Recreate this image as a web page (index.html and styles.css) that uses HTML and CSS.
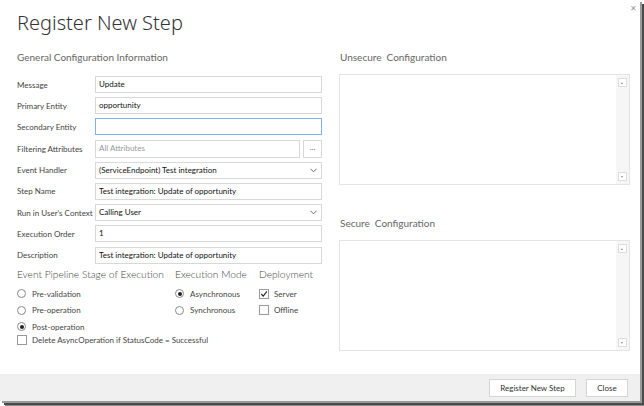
FILE: index.html
```html
<!DOCTYPE html>
<html>
<head>
<meta charset="utf-8">
<link rel="stylesheet" href="styles.css">
</head>
<body>
<div class="dialog">
  <div class="close-x">✕</div>
  <div class="content">
    <h1 class="title">Register New Step</h1>
    <div class="columns">
      <div class="left">
        <h2 class="section">General Configuration Information</h2>
        <div class="form">
          <div class="row"><span class="lbl">Message</span><div class="field">Update</div></div>
          <div class="row"><span class="lbl">Primary Entity</span><div class="field">opportunity</div></div>
          <div class="row"><span class="lbl">Secondary Entity</span><div class="field focus"></div></div>
          <div class="row"><span class="lbl">Filtering Attributes</span><div class="field placeholder">All Attributes</div><div class="dots">...</div></div>
          <div class="row"><span class="lbl">Event Handler</span><div class="field select">(ServiceEndpoint) Test integration<svg class="chev" viewBox="0 0 8 5"><path d="M0.5 0.5 L4 4 L7.5 0.5" fill="none" stroke="#555" stroke-width="1"/></svg></div></div>
          <div class="row"><span class="lbl">Step Name</span><div class="field">Test integration: Update of opportunity</div></div>
          <div class="row"><span class="lbl">Run in User's Context</span><div class="field select">Calling User<svg class="chev" viewBox="0 0 8 5"><path d="M0.5 0.5 L4 4 L7.5 0.5" fill="none" stroke="#555" stroke-width="1"/></svg></div></div>
          <div class="row"><span class="lbl">Execution Order</span><div class="field">1</div></div>
          <div class="row"><span class="lbl">Description</span><div class="field">Test integration: Update of opportunity</div></div>
        </div>
        <div class="options">
          <div class="group stage">
            <div class="ghead">Event Pipeline Stage of Execution</div>
            <div class="opt"><span class="radio"></span>Pre-validation</div>
            <div class="opt"><span class="radio"></span>Pre-operation</div>
            <div class="opt"><span class="radio on"></span>Post-operation</div>
          </div>
          <div class="group mode">
            <div class="ghead">Execution Mode</div>
            <div class="opt"><span class="radio on"></span>Asynchronous</div>
            <div class="opt"><span class="radio"></span>Synchronous</div>
          </div>
          <div class="group deploy">
            <div class="ghead">Deployment</div>
            <div class="opt"><span class="check"><svg viewBox="0 0 9 9"><path d="M1.5 4.5 L3.6 6.8 L7.8 1.6" fill="none" stroke="#222" stroke-width="1.3"/></svg></span>Server</div>
            <div class="opt"><span class="check"></span>Offline</div>
          </div>
        </div>
        <div class="opt delete"><span class="check"></span>Delete AsyncOperation if StatusCode = Successful</div>
      </div>
      <div class="right">
        <h2 class="section">Unsecure&nbsp; Configuration</h2>
        <div class="area">
          <div class="sb"><span class="arr up"></span><span class="arr down"></span></div>
        </div>
        <h2 class="section second">Secure&nbsp; Configuration</h2>
        <div class="area">
          <div class="sb"><span class="arr up"></span><span class="arr down"></span></div>
        </div>
      </div>
    </div>
  </div>
  <div class="footer">
    <button class="btn reg">Register New Step</button>
    <button class="btn cls">Close</button>
  </div>
</div>
</body>
</html>
```
FILE: styles.css
```css
html, body {
  margin: 0;
  padding: 0;
  background: #ffffff;
}
body {
  width: 644px;
  height: 406px;
  overflow: hidden;
  font-family: Lato, "Noto Sans", "Liberation Sans", sans-serif;
  color: #333;
}
.dialog {
  position: relative;
  width: 640px;
  height: 401px;
  background: #fff;
  box-shadow: 2px 2px 0 #9a9a9a, 4px 4px 0 #4a4a4a, 5px 5px 0 #8a8a8a;
  display: flex;
  flex-direction: column;
}
.close-x {
  position: absolute;
  top: 3px;
  right: 3px;
  font-size: 8px;
  color: #999;
}
.content {
  flex: 1;
  padding: 0 0 0 17px;
}
.title {
  margin: 0;
  padding-top: 10px;
  font-family: "Noto Sans", Lato, sans-serif;
  font-size: 20px;
  font-weight: 300;
  color: #333;
  line-height: 26px;
}
.columns {
  display: flex;
  gap: 17px;
}
.left {
  width: 305px;
}
.right {
  width: 291px;
}
.section {
  margin: 0;
  font-size: 10px;
  font-weight: 400;
  color: #666;
  line-height: 16px;
  padding-top: 13px;
  height: 16px;
}
.right .section {
  padding-left: 1px;
}
.right .second {
  padding-top: 30px;
}
.form {
  margin-top: 11px;
  display: flex;
  flex-direction: column;
  gap: 4.2px;
}
.row {
  display: flex;
  align-items: center;
  height: 17px;
}
.lbl {
  width: 78px;
  font-size: 8px;
  color: #444;
  flex: none;
}
.field {
  flex: 1;
  height: 15px;
  border: 1px solid #d8d8d8;
  font-size: 8px;
  line-height: 15px;
  padding-left: 3px;
  color: #111;
  display: flex;
  align-items: center;
  justify-content: space-between;
}
.field.focus {
  border-color: #7fb2e6;
}
.field.placeholder {
  color: #999;
}
.field.select .chev {
  width: 7px;
  height: 5px;
  margin-right: 4px;
}
.dots {
  width: 19px;
  height: 18px;
  margin-left: 3px;
  border: 1px solid #d8d8d8;
  box-sizing: border-box;
  font-size: 8px;
  color: #666;
  text-align: center;
  line-height: 13px;
}
.row:nth-child(4) {
  height: 18px;
}
.row:nth-child(4) .field {
  height: 16px;
}
.options {
  display: flex;
  margin-top: 3px;
}
.group {
  display: flex;
  flex-direction: column;
}
.stage { width: 158px; }
.mode { width: 84px; }
.ghead {
  font-size: 10.2px;
  font-weight: 300;
  color: #444;
  line-height: 14px;
  margin-bottom: 7px;
}
.opt {
  display: flex;
  align-items: center;
  font-size: 8px;
  color: #444;
  height: 12px;
  margin-bottom: 4.5px;
}
.radio {
  width: 7px;
  height: 7px;
  border: 1px solid #888;
  border-radius: 50%;
  margin-right: 6px;
  flex: none;
  position: relative;
}
.radio.on::after {
  content: "";
  position: absolute;
  left: 1.5px;
  top: 1.5px;
  width: 4px;
  height: 4px;
  border-radius: 50%;
  background: #222;
}
.check {
  width: 8px;
  height: 8px;
  border: 1px solid #999;
  margin-right: 5px;
  flex: none;
  display: flex;
}
.check svg {
  width: 8px;
  height: 8px;
}
.delete {
  margin-top: -3px;
}
.area {
  margin-top: 9px;
  height: 109px;
  border: 1px solid #e4e4e4;
  display: flex;
  justify-content: flex-end;
}
.area .sb {
  width: 13px;
  background: #f6f6f6;
  display: flex;
  flex-direction: column;
  justify-content: space-between;
  align-items: center;
  padding: 3px 0;
}
.arr {
  width: 7px;
  height: 7px;
  background: #fff;
  border: 1px solid #ddd;
  position: relative;
}
.arr::after {
  content: "";
  position: absolute;
  left: 2px;
  border-left: 1.5px solid transparent;
  border-right: 1.5px solid transparent;
}
.arr.up::after {
  top: 2.5px;
  border-bottom: 2px solid #888;
}
.arr.down::after {
  top: 2.5px;
  border-top: 2px solid #888;
}
.footer {
  height: 27px;
  background: #f0f0f0;
  display: flex;
  justify-content: flex-end;
  align-items: center;
  gap: 10px;
  padding-right: 12px;
}
.btn {
  font-family: Lato, "Noto Sans", sans-serif;
  font-size: 8px;
  color: #333;
  background: #fff;
  border: 1px solid #d4d4d4;
  height: 18px;
  padding: 0;
  margin-top: 1px;
}
.reg { width: 87px; }
.cls { width: 42px; }
```
